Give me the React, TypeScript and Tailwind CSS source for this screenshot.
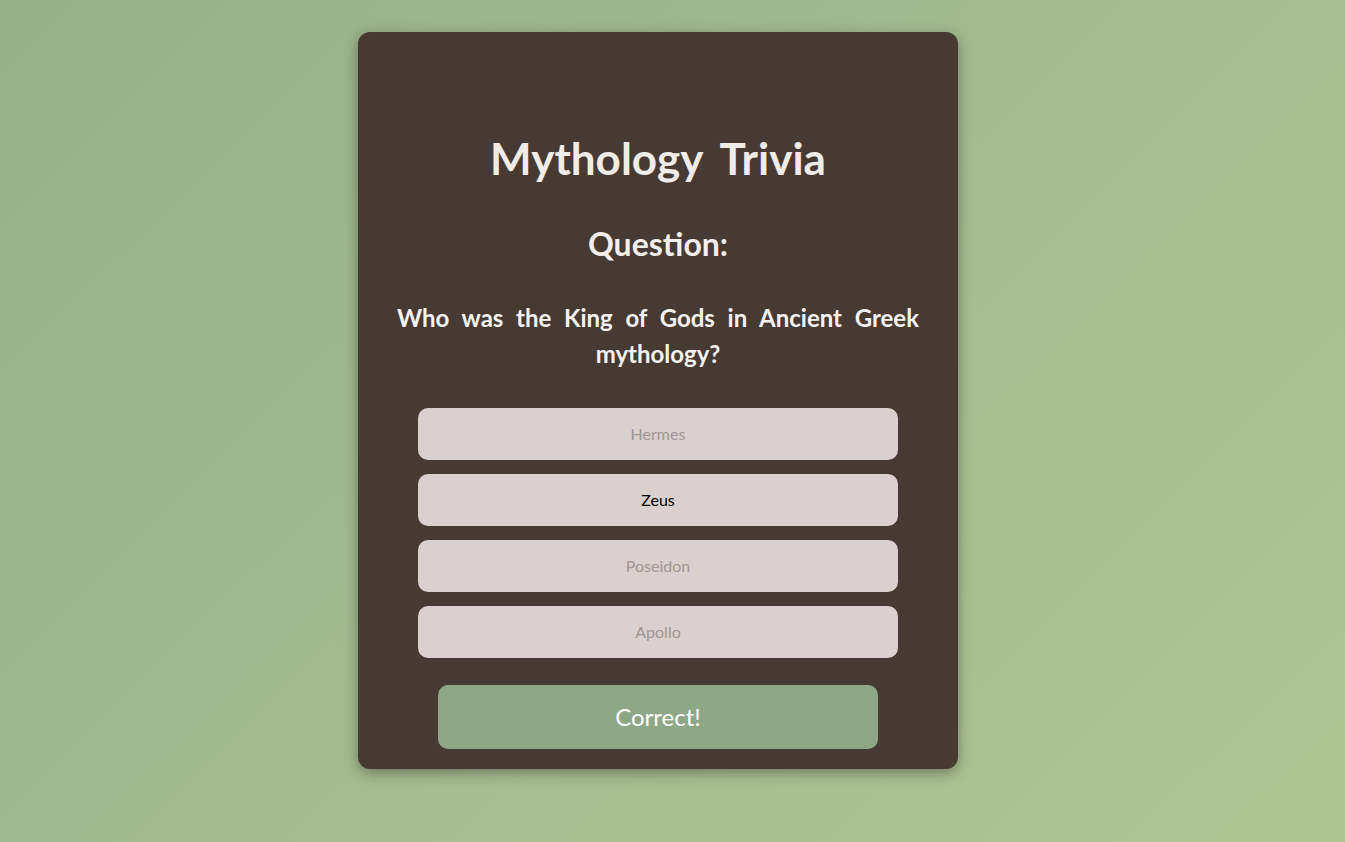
import React from "react";

const options = [
  { label: "Hermes", active: false },
  { label: "Zeus", active: true },
  { label: "Poseidon", active: false },
  { label: "Apollo", active: false },
];

export default function App() {
  return (
    <div
      className="min-h-[842px] w-full bg-[linear-gradient(135deg,#96b08a_0%,#a3bb8f_50%,#aec594_100%)] flex justify-center pt-[32px] pr-[29px]"
      style={{ fontFamily: "Lato, 'Open Sans', sans-serif" }}
    >
      <div className="w-[600px] h-[737px] bg-[#473a32] rounded-[12px] shadow-[0_4px_14px_rgba(0,0,0,0.35)] flex flex-col items-center px-[39px] pt-[100px]">
        <h1 className="text-[44px] leading-[52px] font-bold text-[#f1ece8] [word-spacing:8px]">
          Mythology Trivia
        </h1>
        <h2 className="mt-[40px] text-[32px] leading-[40px] font-bold text-[#f4efec]">
          Question:
        </h2>
        <p className="mt-[36px] w-full text-[24px] leading-[36px] font-bold text-[#f7f2f2] text-justify [text-align-last:center]">
          Who was the King of Gods in Ancient Greek mythology?
        </p>
        <div className="mt-[36px] w-[480px] flex flex-col gap-[14px]">
          {options.map((o) => (
            <button
              key={o.label}
              className={`h-[52px] w-full rounded-[10px] bg-[#d9d0cf] text-[16px] ${
                o.active ? "text-black" : "text-[#a39592]"
              }`}
            >
              {o.label}
            </button>
          ))}
        </div>
        <button className="mt-[27px] w-[440px] h-[64px] rounded-[10px] bg-[#8ea787] text-white text-[24px]">
          Correct!
        </button>
      </div>
    </div>
  );
}
